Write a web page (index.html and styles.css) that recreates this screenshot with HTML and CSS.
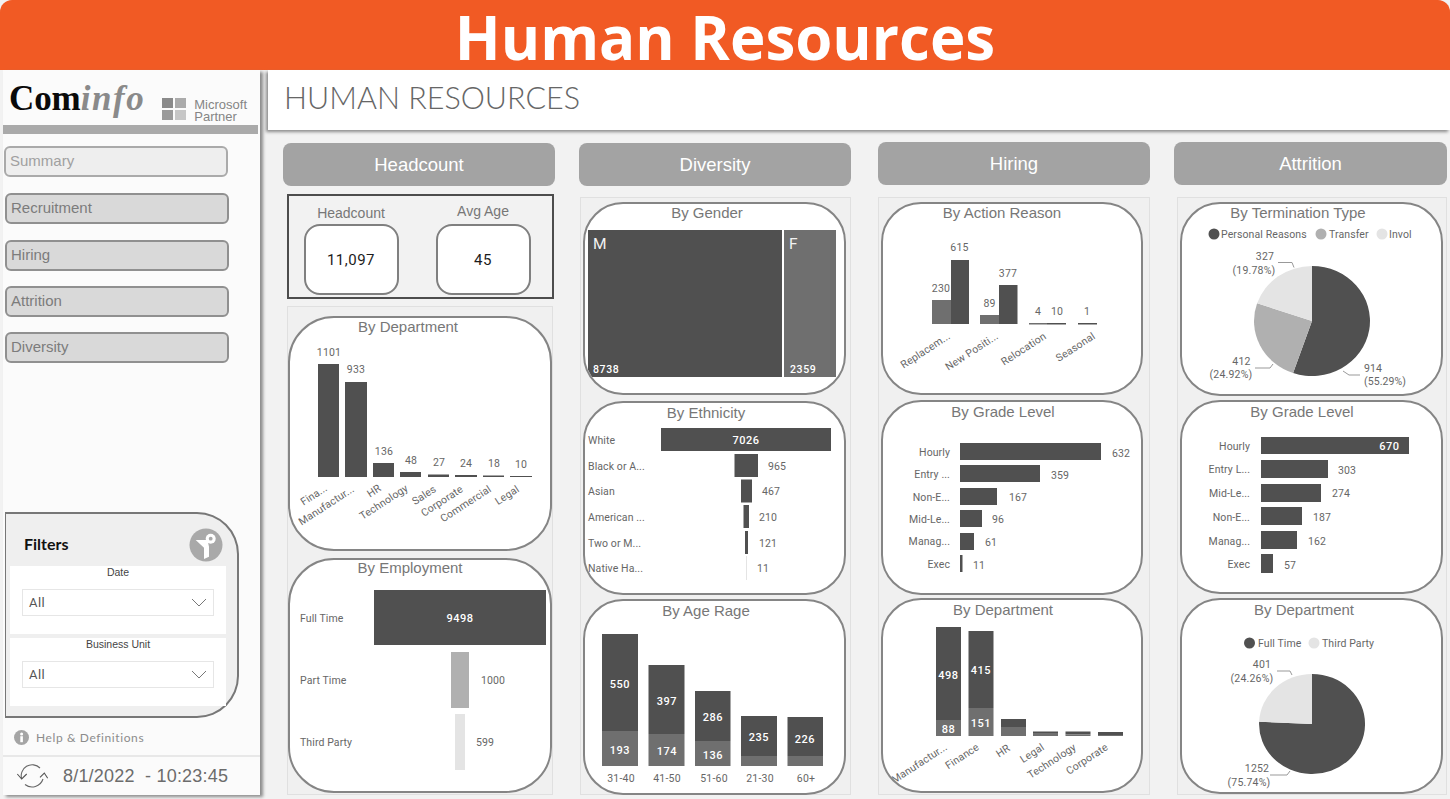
FILE: index.html
```html
<!DOCTYPE html>
<html lang="en">
<head>
<meta charset="utf-8">
<title>Human Resources</title>
<link rel="stylesheet" href="styles.css">
</head>
<body>
<header class="banner"><h1>Human Resources</h1></header>
<div class="app">
  <aside class="sidebar">
    <div class="logo-row">
      <div class="logo"><b>Com</b><i>info</i></div>
      <div class="partner">
        <svg class="ms" width="24" height="22" viewBox="0 0 24 22"><rect width="11" height="10" fill="#8a8a8a"/><rect x="13" width="11" height="10" fill="#ababab"/><rect y="12" width="11" height="10" fill="#9a9a9a"/><rect x="13" y="12" width="11" height="10" fill="#c6c6c6"/></svg>
        <div class="ms-text">Microsoft<br>Partner</div>
      </div>
    </div>
    <div class="rule"></div>
    <nav class="nav">
      <div class="nav-btn nav-active">Summary</div>
      <div class="nav-btn">Recruitment</div>
      <div class="nav-btn">Hiring</div>
      <div class="nav-btn">Attrition</div>
      <div class="nav-btn">Diversity</div>
    </nav>
    <section class="filters">
      <div class="filters-head">
        <span>Filters</span>
        <svg width="34" height="34" viewBox="0 0 34 34"><circle cx="17" cy="17" r="16.5" fill="#a9a9a9"/><path d="M6.7 12H18.5L20 18.7V28.7L15 31V19.7Z" fill="#fff"/><circle cx="21.7" cy="10.7" r="5" fill="#fff"/><circle cx="21.7" cy="10.7" r="1.9" fill="#a9a9a9"/></svg>
      </div>
      <div class="slicer">
        <div class="slicer-label">Date</div>
        <div class="select"><span>All</span><svg width="16" height="9" viewBox="0 0 16 9"><path d="M1 1l7 7 7-7" fill="none" stroke="#777"/></svg></div>
      </div>
      <div class="slicer">
        <div class="slicer-label">Business Unit</div>
        <div class="select"><span>All</span><svg width="16" height="9" viewBox="0 0 16 9"><path d="M1 1l7 7 7-7" fill="none" stroke="#777"/></svg></div>
      </div>
    </section>
    <div class="help">
      <svg width="15" height="15" viewBox="0 0 15 15"><circle cx="7.5" cy="7.5" r="7.5" fill="#a5a5a5"/><rect x="6.3" y="6.2" width="2.6" height="6" fill="#fff"/><circle cx="7.6" cy="3.9" r="1.5" fill="#fff"/></svg>
      <span>Help &amp; Definitions</span>
    </div>
    <div class="stamp">
      <svg width="32" height="24" viewBox="0 0 32 24"><path d="M5.7 15A11 11 0 0 1 24 4M27 15A11.5 11.5 0 0 1 9 20.5" fill="none" stroke="#666" stroke-width="1.1"/><path d="M1.3 10L5.7 15L10.7 10M24 13.3L28.3 9L31.7 14.3" fill="none" stroke="#555" stroke-width="1.1"/></svg>
      <span>8/1/2022&nbsp; - 10:23:45</span>
    </div>
  </aside>

  <main class="content">
    <div class="titlebar">HUMAN RESOURCES</div>
    <div class="cols">

      <section class="col col1">
        <div class="col-head">Headcount</div>
        <div class="kpis">
          <div class="kpi"><div class="kpi-label">Headcount</div><div class="kpi-box">11,097</div></div>
          <div class="kpi"><div class="kpi-label kpi-label-up">Avg Age</div><div class="kpi-box">45</div></div>
        </div>
        <div class="panel panel1">
          <div class="card c1a">
            <svg viewBox="290 318 260 231">
              <text class="t" x="408" y="327">By Department</text>
              <g class="dark">
                <rect x="318" y="364" width="21" height="113"/><rect x="345" y="382" width="22" height="95"/><rect x="373" y="463" width="21" height="14"/><rect x="400" y="472" width="21" height="5"/><rect x="428" y="474.5" width="21" height="2.5"/><rect x="455" y="475" width="22" height="2"/><rect x="483" y="475.5" width="21" height="1.5"/><rect x="510" y="476" width="22" height="1"/>
              </g>
              <g class="v">
                <text x="329" y="352">1101</text><text x="356" y="369">933</text><text x="384" y="451">136</text><text x="411" y="460">48</text><text x="439" y="462">27</text><text x="466" y="463">24</text><text x="494" y="463">18</text><text x="521" y="464">10</text>
              </g>
              <g class="r">
                <text transform="translate(329 487) rotate(-33)">Fina...</text>
                <text transform="translate(356 488) rotate(-33)">Manufactur...</text>
                <text transform="translate(383 487) rotate(-33)">HR</text>
                <text transform="translate(410 487) rotate(-33)">Technology</text>
                <text transform="translate(438 488) rotate(-33)">Sales</text>
                <text transform="translate(465 488) rotate(-33)">Corporate</text>
                <text transform="translate(493 488) rotate(-33)">Commercial</text>
                <text transform="translate(521 488) rotate(-33)">Legal</text>
              </g>
            </svg>
          </div>
          <div class="card c1b">
            <svg viewBox="290 560 260 231">
              <text class="t" x="410" y="568">By Employment</text>
              <rect class="dark" x="374" y="590" width="172" height="55"/>
              <rect class="mid" x="451" y="652" width="18" height="56"/>
              <rect class="light" x="455" y="714" width="10" height="56"/>
              <g class="s"><text x="300" y="618">Full Time</text><text x="300" y="680">Part Time</text><text x="300" y="742">Third Party</text><text x="481" y="680">1000</text><text x="476" y="742">599</text></g>
              <text class="w" x="460" y="618">9498</text>
            </svg>
          </div>
        </div>
      </section>

      <section class="col col2">
        <div class="col-head">Diversity</div>
        <div class="panel">
          <div class="card c2a">
            <svg viewBox="585 204 259 189">
              <text class="t" x="707" y="213">By Gender</text>
              <rect class="dark" x="588" y="230" width="194" height="147"/>
              <rect class="soft" x="784" y="230" width="52" height="147"/>
              <text class="big" x="593" y="244">M</text><text class="big" x="789" y="244">F</text>
              <text class="ws" x="593" y="369">8738</text><text class="ws" x="790" y="369">2359</text>
            </svg>
          </div>
          <div class="card c2b">
            <svg viewBox="585 403 259 190">
              <text class="t" x="706" y="413">By Ethnicity</text>
              <g class="dark">
                <rect x="661" y="428" width="170" height="23"/><rect x="734.5" y="454" width="23.5" height="23"/><rect x="741" y="479.5" width="11" height="23"/><rect x="743.5" y="505" width="5.5" height="23"/><rect x="745" y="531" width="3" height="23"/>
              </g>
              <rect class="light" x="746" y="556" width="1" height="24"/>
              <g class="s">
                <text x="588" y="440">White</text><text x="588" y="466">Black or A...</text><text x="588" y="491">Asian</text><text x="588" y="517">American ...</text><text x="588" y="543">Two or M...</text><text x="588" y="568">Native Ha...</text>
                <text x="768" y="466">965</text><text x="762" y="491">467</text><text x="759" y="517">210</text><text x="759" y="543">121</text><text x="757" y="568">11</text>
              </g>
              <text class="w" x="746" y="440">7026</text>
            </svg>
          </div>
          <div class="card c2c">
            <svg viewBox="585 601 259 192">
              <text class="t" x="706" y="611">By Age Rage</text>
              <g class="dark"><rect x="602" y="634" width="36" height="97"/><rect x="648.5" y="665" width="36" height="69"/><rect x="695" y="691" width="35.5" height="50"/><rect x="741" y="716" width="36" height="40"/><rect x="787.5" y="717" width="35.5" height="39"/></g>
              <g class="soft"><rect x="602" y="731" width="36" height="35"/><rect x="648.5" y="734" width="36" height="32"/><rect x="695" y="741" width="35.5" height="25"/><rect x="741" y="756" width="36" height="10"/><rect x="787.5" y="756" width="35.5" height="10"/></g>
              <g class="w"><text x="620" y="684">550</text><text x="620" y="750">193</text><text x="667" y="701">397</text><text x="667" y="751">174</text><text x="713" y="717">286</text><text x="713" y="755">136</text><text x="759" y="737">235</text><text x="805" y="739">226</text></g>
              <g class="v"><text x="621" y="778">31-40</text><text x="667" y="778">41-50</text><text x="714" y="778">51-60</text><text x="760" y="778">21-30</text><text x="806" y="778">60+</text></g>
            </svg>
          </div>
        </div>
      </section>

      <section class="col col3">
        <div class="col-head">Hiring</div>
        <div class="panel">
          <div class="card c3a">
            <svg viewBox="883 204 258 189">
              <text class="t" x="1002" y="213">By Action Reason</text>
              <g class="soft"><rect x="932" y="300" width="19" height="24"/><rect x="980" y="315" width="19" height="9"/><rect x="1029" y="323" width="18" height="1.5"/></g>
              <g class="dark"><rect x="951" y="260" width="18" height="64"/><rect x="999" y="285" width="18.5" height="39"/><rect x="1047" y="323" width="19" height="1.5"/><rect x="1078" y="323" width="19" height="1.5"/></g>
              <g class="v"><text x="941" y="288">230</text><text x="959.5" y="247">615</text><text x="989.5" y="303">89</text><text x="1008" y="273">377</text><text x="1038" y="311">4</text><text x="1057" y="311">10</text><text x="1087" y="311">1</text></g>
              <g class="r">
                <text transform="translate(952 335) rotate(-33)">Replacem...</text>
                <text transform="translate(1000 335) rotate(-33)">New Positi...</text>
                <text transform="translate(1048 335) rotate(-33)">Relocation</text>
                <text transform="translate(1097 335) rotate(-33)">Seasonal</text>
              </g>
            </svg>
          </div>
          <div class="card c3b">
            <svg viewBox="883 402 258 191">
              <text class="t" x="1003" y="412">By Grade Level</text>
              <g class="dark"><rect x="960" y="443" width="141" height="17"/><rect x="960" y="465" width="80" height="17"/><rect x="960" y="488" width="37" height="17"/><rect x="960" y="510" width="22" height="17"/><rect x="960" y="533" width="14" height="17"/><rect x="960" y="555" width="2.5" height="17"/></g>
              <g class="s e"><text x="950" y="452">Hourly</text><text x="950" y="474">Entry ...</text><text x="950" y="497">Non-E...</text><text x="950" y="519">Mid-Le...</text><text x="950" y="541">Manag...</text><text x="950" y="564">Exec</text></g>
              <g class="s"><text x="1112" y="453">632</text><text x="1051" y="475">359</text><text x="1009" y="497">167</text><text x="992" y="519">96</text><text x="985" y="542">61</text><text x="973" y="565">11</text></g>
            </svg>
          </div>
          <div class="card c3c">
            <svg viewBox="883 600 258 191">
              <text class="t" x="1003" y="610">By Department</text>
              <g class="dark"><rect x="936" y="627" width="25" height="93"/><rect x="968.5" y="631" width="25" height="77"/><rect x="1001" y="719" width="25" height="8"/><rect x="1033" y="731.5" width="25" height="1.5"/><rect x="1065.5" y="731.5" width="25" height="3"/><rect x="1098" y="732" width="25" height="3"/></g>
              <g class="soft"><rect x="936" y="720" width="25" height="16"/><rect x="968.5" y="708" width="25" height="28"/><rect x="1001" y="727" width="25" height="9"/><rect x="1033" y="733" width="25" height="3"/><rect x="1065.5" y="734.5" width="25" height="1.5"/><rect x="1098" y="735" width="25" height="1"/></g>
              <g class="w"><text x="948.5" y="675">498</text><text x="948.5" y="729">88</text><text x="981" y="670">415</text><text x="981" y="723">151</text></g>
              <g class="r">
                <text transform="translate(949 746) rotate(-33)">Manufactur...</text>
                <text transform="translate(981 746) rotate(-33)">Finance</text>
                <text transform="translate(1012 747) rotate(-33)">HR</text>
                <text transform="translate(1046 746) rotate(-33)">Legal</text>
                <text transform="translate(1078 746) rotate(-33)">Technology</text>
                <text transform="translate(1110 746) rotate(-33)">Corporate</text>
              </g>
            </svg>
          </div>
        </div>
      </section>

      <section class="col col4">
        <div class="col-head">Attrition</div>
        <div class="panel">
          <div class="card c4a">
            <svg viewBox="1182 204 259 190">
              <text class="t" x="1298" y="213">By Termination Type</text>
              <circle class="dark" cx="1214" cy="234" r="5.5"/><circle class="mid" cx="1321" cy="234" r="5.5"/><circle class="light" cx="1382" cy="234" r="5.5"/>
              <g class="s"><text x="1221" y="234">Personal Reasons</text><text x="1329" y="234">Transfer</text><text x="1389" y="234">Invol</text></g>
              <path class="dark" d="M1312 321V266A58 55 0 1 1 1293.1 373Z"/>
              <path class="mid" d="M1312 321L1293.1 373A58 55 0 0 1 1257.1 303.3Z"/>
              <path class="light" d="M1312 321L1257.1 303.3A58 55 0 0 1 1312 266Z"/>
              <g class="lead"><path d="M1278 262.5h14l2 5"/><path d="M1255 368h15l3-4"/><path d="M1343 371l6 4h11"/></g>
              <g class="v"><text x="1265" y="256">327</text><text x="1254" y="270">(19.78%)</text><text x="1241.5" y="361">412</text><text x="1231" y="374">(24.92%)</text></g>
              <g class="s"><text x="1364" y="368">914</text><text x="1364" y="381">(55.29%)</text></g>
            </svg>
          </div>
          <div class="card c4b">
            <svg viewBox="1182 402 259 190">
              <text class="t" x="1302" y="412">By Grade Level</text>
              <g class="dark"><rect x="1261" y="437" width="148" height="17"/><rect x="1261" y="460" width="67" height="18"/><rect x="1261" y="484" width="60" height="18"/><rect x="1261" y="507" width="41" height="18"/><rect x="1261" y="531" width="36" height="18"/><rect x="1261" y="554" width="12" height="19"/></g>
              <g class="s e"><text x="1250" y="446">Hourly</text><text x="1250" y="469">Entry L...</text><text x="1250" y="493">Mid-Le...</text><text x="1250" y="517">Non-E...</text><text x="1250" y="541">Manag...</text><text x="1250" y="564">Exec</text></g>
              <g class="s"><text x="1338" y="470">303</text><text x="1332" y="493">274</text><text x="1313" y="517">187</text><text x="1308" y="541">162</text><text x="1284" y="565">57</text></g>
              <text class="w" x="1389.5" y="446">670</text>
            </svg>
          </div>
          <div class="card c4c">
            <svg viewBox="1182 600 259 192">
              <text class="t" x="1304" y="610">By Department</text>
              <circle class="dark" cx="1249.5" cy="643" r="5.5"/><circle class="light" cx="1314" cy="643" r="5.5"/>
              <g class="s"><text x="1258" y="643">Full Time</text><text x="1322" y="643">Third Party</text></g>
              <path class="dark" d="M1312 724V674A53 50 0 1 1 1259.1 721.7Z"/>
              <path class="light" d="M1312 724L1259.1 721.7A53 50 0 0 1 1312 674Z"/>
              <g class="lead"><path d="M1277 671h13l2 4"/><path d="M1270 775h17l3-4"/></g>
              <g class="v"><text x="1262" y="664">401</text><text x="1252" y="678">(24.26%)</text><text x="1257" y="768">1252</text><text x="1249" y="782">(75.74%)</text></g>
            </svg>
          </div>
        </div>
      </section>

    </div>
  </main>
</div>
</body>
</html>
```
FILE: styles.css
```css
* { box-sizing: border-box; }
html, body { margin: 0; height: 799px; overflow: hidden; }
body { width: 1450px; background: #f2f2f2; font-family: "Liberation Sans", Arial, sans-serif; color: #777; }

.banner { height: 70px; background: #f15a24; border-radius: 12px 12px 0 0; display: flex; justify-content: center; }
.banner h1 { margin: 2px 0 0; font: 700 60px/70px "Open Sans", sans-serif; color: #fff; white-space: nowrap; }

.app { display: flex; height: 729px; }

/* sidebar */
.sidebar { width: 257px; height: 725px; margin-left: 3px; background: #fbfbfb; box-shadow: 3px 2px 3px #8c8c8c; display: flex; flex-direction: column; }
.logo-row { height: 55px; display: flex; justify-content: space-between; padding: 9px 13px 0 6px; }
.logo { font: 35px/40px "Liberation Serif", serif; letter-spacing: -.1px; }
.logo b { color: #0a0a0a; }
.logo i { color: #8a8a8a; font-weight: 700; letter-spacing: 1.6px; }
.partner { display: flex; gap: 8px; padding-top: 19px; }
.ms-text { font-size: 13px; line-height: 11.5px; color: #858585; padding-top: 1px; }
.rule { height: 9px; width: 255px; background: #aaa; }
.nav { display: flex; flex-direction: column; gap: 15px; padding: 12px 0 0 2px; }
.nav-btn { width: 224px; height: 31px; border: 2px solid #909090; border-radius: 6px; background: #d9d9d9; font-size: 15px; line-height: 26px; padding-left: 4px; color: #7c7c7c; }
.nav-btn:nth-child(-n+2) { margin-bottom: 1px; }
.nav-active { background: #eee; border-color: #aaa; margin-left: -1px; color: #a0a0a0; padding-left: 4px; }

.filters { margin: auto 0 0 2px; width: 234px; height: 206px; background: #efefef; border: 2px solid #777; border-left-width: 1px; border-radius: 0 42px 42px 0; }
.filters-head { height: 52px; display: flex; align-items: center; justify-content: space-between; padding: 10px 14px 0 18px; font: 700 16px "Lato", sans-serif; color: #111; }
.filters-head span { margin-bottom: 3px; }
.slicer { width: 216px; height: 68px; margin: 0 0 4px 4px; background: #fff; }
.slicer-label { text-align: center; font: 10.5px/12px "Liberation Sans", sans-serif; color: #444; }
.select { width: 192px; height: 27px; margin: 11px 0 0 12px; border: 1px solid #e6e6e6; display: flex; justify-content: space-between; align-items: center; padding: 0 6px 0 6px; font: 13px "Roboto", sans-serif; color: #555; letter-spacing: .4px; }
.help { height: 37px; padding: 2px 0 0 11px; display: flex; align-items: center; gap: 7px; font: 12px "Lato", sans-serif; letter-spacing: .6px; color: #8c8c8c; }
.stamp { height: 40px; border-top: 2px solid #e8e8e8; display: flex; align-items: center; gap: 15px; padding-left: 13px; font-size: 18px; letter-spacing: .2px; color: #6c6c6c; }

/* main */
.content { width: 1182px; margin-left: 8px; }
.titlebar { height: 60px; background: #fff; box-shadow: -2px 2px 3px #8c8c8c; font: 300 30.5px/55px "Lato", sans-serif; color: #666; padding-left: 16px; }
.cols { display: flex; padding: 12px 0 0 15px; }
.col { width: 272px; }
.col1, .col2 { padding-top: 1px; }
.col1 { margin-right: 24px; }
.col2 { margin-right: 27px; }
.col3 { margin-right: 24px; width: 272px; }
.col4 { width: 273px; }
.col-head { height: 43px; border-radius: 8px; background: #a3a3a3; color: #fff; font-size: 18.5px; line-height: 44px; text-align: center; }

.kpis { width: 267px; height: 105px; margin: 8px 0 0 4px; border: 2px solid #4d4d4d; display: flex; gap: 37px; padding-left: 14.5px; }
.kpi { width: 95px; }
.kpi-label { font-size: 14px; line-height: 16px; text-align: center; margin-top: 9px; height: 19px; }
.kpi-label-up { margin-top: 7px; height: 21px; }
.kpi-box { height: 71px; background: #fff; border: 2px solid #808080; border-radius: 16px; display: flex; align-items: center; justify-content: center; font: 15px "Roboto", sans-serif; letter-spacing: .5px; color: #1c1c1c; }

.panel { background: #f0f0f0; border: 1px solid #e0e0e0; height: 598px; margin-top: 12px; padding: 4px 0 0 2px; }
.col2 .panel { margin: 11px 0 0 1px; width: 271px; }
.col3 .panel { margin-top: 12px; width: 272px; }
.col4 .panel { margin: 12px 0 0 3px; width: 270px; }
.panel1 { width: 266px; height: 489px; margin: 7px 0 0 4px; padding: 9px 0 0 0; }

.card { background: #fff; border: 2px solid #858585; border-radius: 40px; overflow: hidden; }
.card svg { display: block; width: 100%; height: 100%; }
.c1a, .c1b { width: 264px; height: 235px; border-radius: 46px; }
.c1a { margin-bottom: 7px; }
.c2a, .c2b, .c2c { width: 263px; }
.c2a { height: 193px; margin-bottom: 6px; }
.c2b { height: 194px; margin-bottom: 4px; }
.c2c { height: 196px; }
.c3a, .c3b, .c3c { width: 262px; }
.c3a { height: 193px; margin-bottom: 5px; }
.c3b { height: 195px; margin-bottom: 3px; }
.c3c { height: 195px; }
.c4a, .c4b, .c4c { width: 263px; }
.c4a { height: 194px; margin-bottom: 4px; }
.c4b { height: 194px; margin-bottom: 4px; }
.c4c { height: 196px; }

/* chart marks */
.dark { fill: #505050; }
.soft { fill: #6f6f6f; }
.mid { fill: #b0b0b0; }
.light { fill: #e4e4e4; }
.lead path { fill: none; stroke: #999; }
.card text { dominant-baseline: central; }
.t { font: 15px "Liberation Sans", sans-serif; fill: #777; text-anchor: middle; transform: translateY(-1px); }
.v, .s, .r { font: 10.5px "Roboto", sans-serif; fill: #666; }
.v { text-anchor: middle; letter-spacing: .2px; }
.s { letter-spacing: .1px; }
.e { text-anchor: end; }
.r { text-anchor: end; letter-spacing: .15px; transform: translateX(-3px); }
.w { font: 500 11px "Roboto", sans-serif; letter-spacing: .5px; fill: #fff; text-anchor: middle; }
.ws { font: 500 10.5px "Roboto", sans-serif; letter-spacing: .6px; fill: #fff; }
.big { font: 15.5px "Roboto", sans-serif; fill: #f2f2f2; }
```
